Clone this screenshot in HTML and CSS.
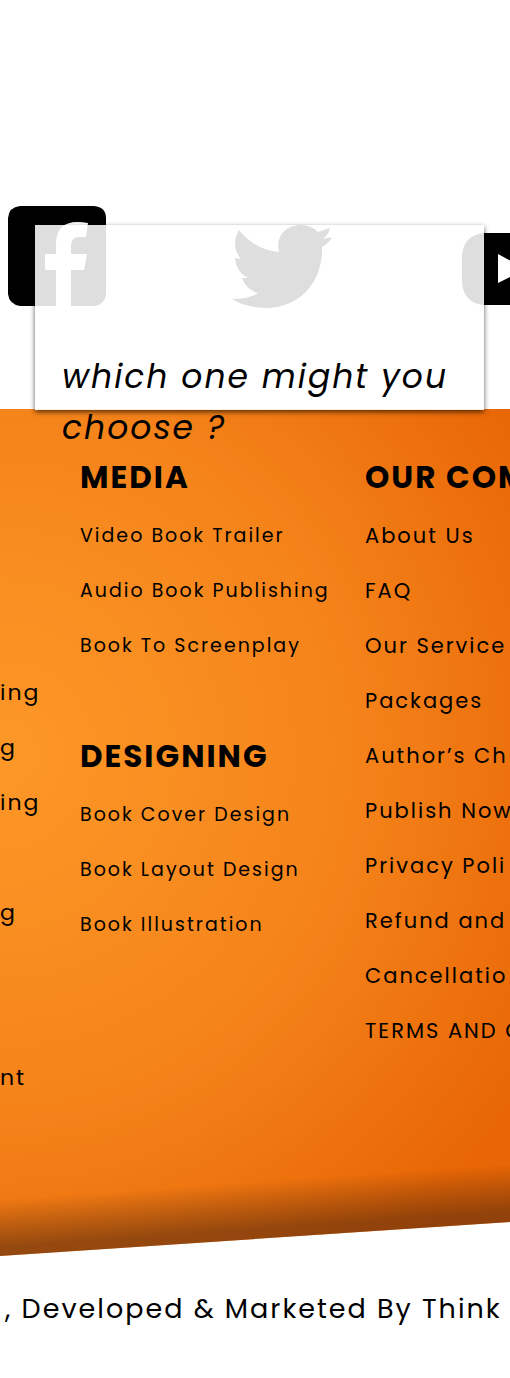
FILE: index.html
```
<!DOCTYPE html>
<html lang="en">
<head>
<meta charset="utf-8">
<meta name="viewport" content="width=device-width, initial-scale=1">
<title>Footer</title>
<link rel="stylesheet" href="styles.css">
</head>
<body>
<section class="social">
  <nav class="social-links" aria-label="Social media">
    <a href="#facebook" aria-label="Facebook"><svg class="icon-facebook" viewBox="0 0 98 100"><path fill-rule="evenodd" d="M12 0H86Q98 1 98 12V88Q97 98 87 100H63V64H76L79 48H63V40Q63 31 71 31H78L80 17Q48 11 48 38V48H37V64H48V100H12Q1 98 0 88V12Q1 1 12 0Z"/></svg></a>
    <a href="#twitter" aria-label="Twitter"><svg class="icon-twitter" viewBox="0 0 102 83"><path d="M7 5Q23 25 47 27C43 9 56 0 69 0Q79 0 86 7L98 3Q97 9 91 14L100 12Q97 18 90 22C91 57 68 82 36 83Q14 83 0 74Q18 74 26 68Q14 65 10 53H16Q4 47 3 33L9 34Q-2 21 7 5Z"/></svg></a>
    <a href="#youtube" aria-label="YouTube"><svg class="icon-youtube" viewBox="-2 0 102 75"><path fill-rule="evenodd" d="M22 0H78Q100 2 100 22V50Q98 70 78 72H22Q2 70 0 50V22Q2 2 22 0ZM36 21V50L64 36Z"/></svg></a>
  </nav>
  <aside class="prompt"><p>which one might you choose ?</p></aside>
</section>
<footer>
  <div class="panel">
    <ul class="links services">
      <li><a href="#">ing</a></li>
      <li><a href="#">g</a></li>
      <li><a href="#">ing</a></li>
      <li class="skip-one"><a href="#">g</a></li>
      <li class="skip-two"><a href="#">nt</a></li>
    </ul>
    <div class="column">
      <section>
        <h2>MEDIA</h2>
        <ul class="links">
          <li><a href="#">Video Book Trailer</a></li>
          <li><a href="#">Audio Book Publishing</a></li>
          <li><a href="#">Book To Screenplay</a></li>
        </ul>
      </section>
      <section>
        <h2>DESIGNING</h2>
        <ul class="links">
          <li><a href="#">Book Cover Design</a></li>
          <li><a href="#">Book Layout Design</a></li>
          <li><a href="#">Book Illustration</a></li>
        </ul>
      </section>
    </div>
    <section class="company">
      <h2>OUR COM</h2>
      <ul class="links">
        <li><a href="#">About Us</a></li>
        <li><a href="#">FAQ</a></li>
        <li><a href="#">Our Service</a></li>
        <li><a href="#">Packages</a></li>
        <li><a href="#">Author’s Ch</a></li>
        <li><a href="#">Publish Now</a></li>
        <li><a href="#">Privacy Poli</a></li>
        <li><a href="#">Refund and</a></li>
        <li><a href="#">Cancellatio</a></li>
        <li><a href="#">TERMS AND C</a></li>
      </ul>
    </section>
  </div>
  <p class="credit">, Developed &amp; Marketed By Think</p>
</footer>
</body>
</html>
```
FILE: styles.css
```
* { box-sizing: border-box; }

body {
  margin: 0;
  overflow-x: hidden;
  background: #fff;
  color: #000;
  font-family: Poppins, Inter, "Open Sans", sans-serif;
  letter-spacing: 2px;
}

h2, p, ul { margin: 0; padding: 0; }
ul { list-style: none; }
a { color: inherit; text-decoration: none; }
svg { display: block; }

.social {
  position: relative;
  z-index: 1;
  padding: 206px 0 101px 8px;
}

.social-links {
  display: flex;
  align-items: flex-end;
  gap: 126px;
  height: 102px;
  overflow: hidden;
}

.social-links a { flex: none; }
.social-links a:first-child { align-self: flex-start; }
.icon-facebook { width: 98px; height: 100px; }
.icon-twitter { width: 102px; height: 83px; }
.icon-youtube { width: 102px; height: 75px; }

.prompt {
  position: absolute;
  top: 225px;
  right: 26px;
  left: 35px;
  height: 185px;
  padding: 126px 27px 0;
  background: rgba(255, 255, 255, 0.87);
  box-shadow: 0 2px 5px rgba(0, 0, 0, 0.65);
  font-size: 33px;
  font-style: italic;
  line-height: 51px;
}

.panel {
  display: grid;
  grid-template-columns: 80px 285px 1fr;
  padding: 45px 0 151px;
  overflow: hidden;
  background:
    linear-gradient(176deg, transparent calc(100% - 92px), rgba(60, 30, 15, 0.28) calc(100% - 66px), rgba(60, 30, 15, 0.5) calc(100% - 44px)),
    radial-gradient(circle at 0 345px, #fd9827 0, #f5841b 340px, #e86605 620px);
  clip-path: polygon(0 0, 100% 0, 100% calc(100% - 34px), 0 100%);
}

h2 {
  font-size: 31px;
  font-weight: 700;
  line-height: 46px;
  margin-bottom: 8px;
  white-space: nowrap;
}

.links {
  font-size: 19px;
  line-height: 55px;
  white-space: nowrap;
}

.column {
  display: grid;
  align-content: start;
  gap: 60px;
}

.company .links { font-size: 21px; }

.services {
  padding-top: 211px;
  font-size: 22px;
}

.skip-one { margin-top: 55px; }
.skip-two { margin-top: 110px; }

.credit {
  padding: 28px 0 44px 5px;
  overflow: hidden;
  font-size: 27px;
  line-height: 50px;
  white-space: nowrap;
}
```
